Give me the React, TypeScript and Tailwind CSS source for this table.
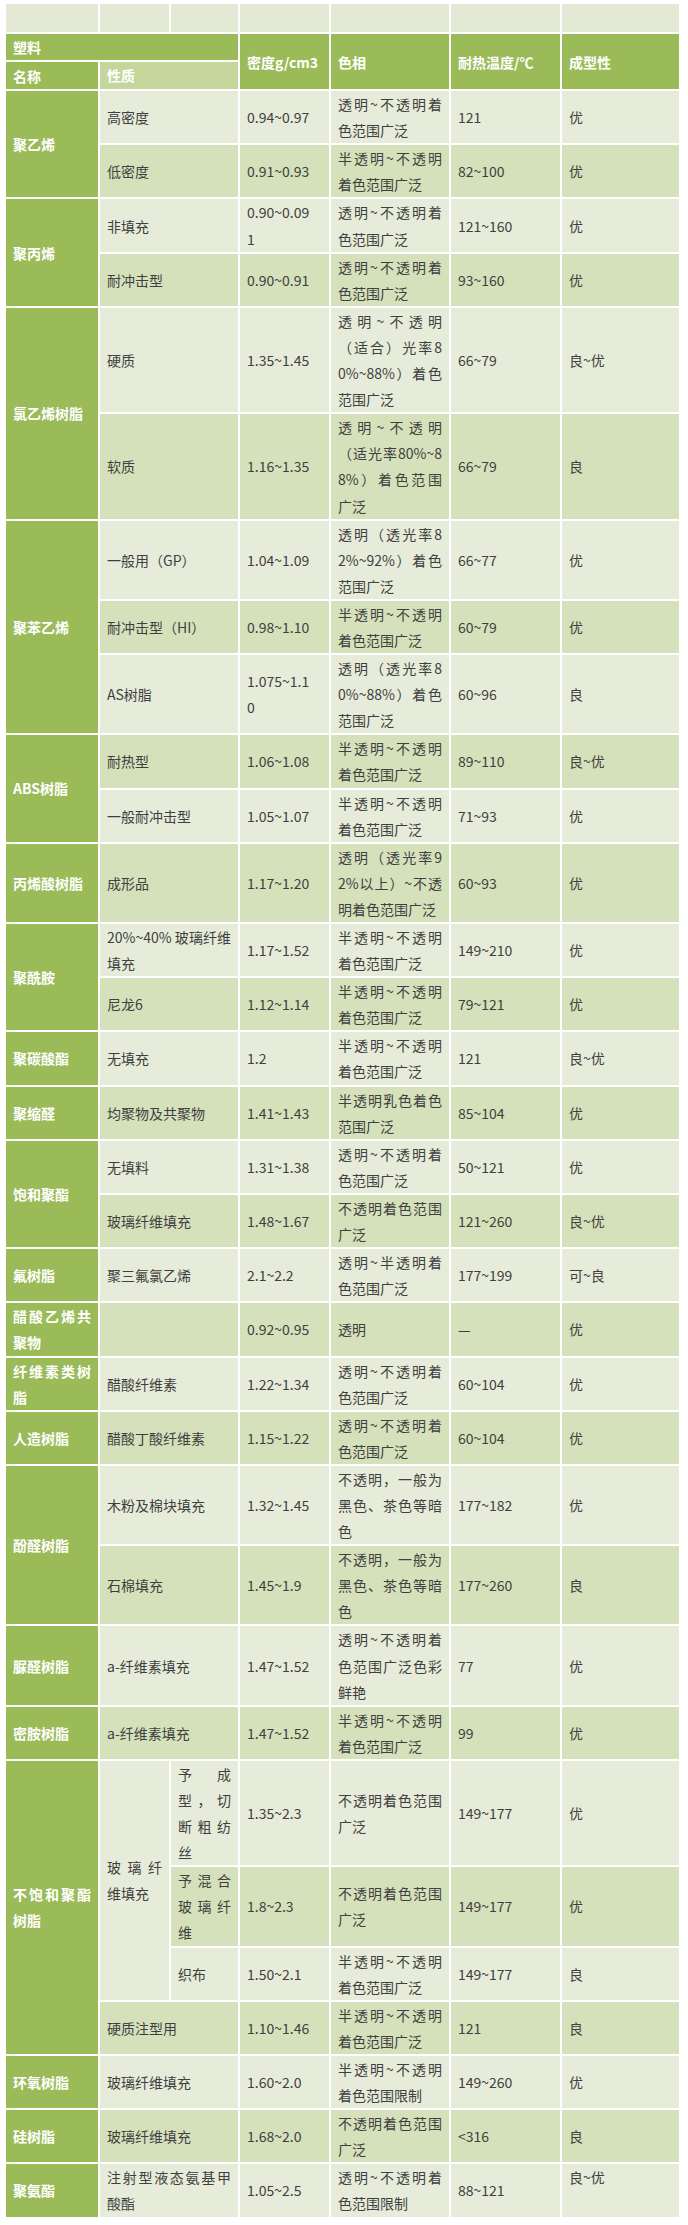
import React from 'react';

// Plastic properties table (green banded style).
type Row = {
  prop?: string[];
  density: string[];
  color: string[];
  heat: string;
  form: string;
  formTop?: boolean;
};

type Group = { name: string[]; rows: Row[] };

const SEMI = ['半透明~不透明', '着色范围广泛'];
const CLEAR = ['透明~不透明着', '色范围广泛'];
const OPAQUE = ['不透明着色范围', '广泛'];
const DARK_TONE = ['不透明，一般为', '黑色、茶色等暗', '色'];

const GROUPS_TOP: Group[] = [
  {
    name: ['聚乙烯'],
    rows: [
      { prop: ['高密度'], density: ['0.94~0.97'], color: CLEAR, heat: '121', form: '优' },
      { prop: ['低密度'], density: ['0.91~0.93'], color: SEMI, heat: '82~100', form: '优' },
    ],
  },
  {
    name: ['聚丙烯'],
    rows: [
      { prop: ['非填充'], density: ['0.90~0.09', '1'], color: CLEAR, heat: '121~160', form: '优' },
      { prop: ['耐冲击型'], density: ['0.90~0.91'], color: CLEAR, heat: '93~160', form: '优' },
    ],
  },
  {
    name: ['氯乙烯树脂'],
    rows: [
      {
        prop: ['硬质'],
        density: ['1.35~1.45'],
        color: ['透明~不透明', '（适合）光率8', '0%~88%）着色', '范围广泛'],
        heat: '66~79',
        form: '良~优',
      },
      {
        prop: ['软质'],
        density: ['1.16~1.35'],
        color: ['透明~不透明', '（适光率80%~8', '8%）着色范围', '广泛'],
        heat: '66~79',
        form: '良',
      },
    ],
  },
  {
    name: ['聚苯乙烯'],
    rows: [
      {
        prop: ['一般用（GP）'],
        density: ['1.04~1.09'],
        color: ['透明（透光率8', '2%~92%）着色', '范围广泛'],
        heat: '66~77',
        form: '优',
      },
      { prop: ['耐冲击型（HI）'], density: ['0.98~1.10'], color: SEMI, heat: '60~79', form: '优' },
      {
        prop: ['AS树脂'],
        density: ['1.075~1.1', '0'],
        color: ['透明（透光率8', '0%~88%）着色', '范围广泛'],
        heat: '60~96',
        form: '良',
      },
    ],
  },
  {
    name: ['ABS树脂'],
    rows: [
      { prop: ['耐热型'], density: ['1.06~1.08'], color: SEMI, heat: '89~110', form: '良~优' },
      { prop: ['一般耐冲击型'], density: ['1.05~1.07'], color: SEMI, heat: '71~93', form: '优' },
    ],
  },
  {
    name: ['丙烯酸树脂'],
    rows: [
      {
        prop: ['成形品'],
        density: ['1.17~1.20'],
        color: ['透明（透光率9', '2%以上）~不透', '明着色范围广泛'],
        heat: '60~93',
        form: '优',
      },
    ],
  },
  {
    name: ['聚酰胺'],
    rows: [
      { prop: ['20%~40% 玻璃纤维', '填充'], density: ['1.17~1.52'], color: SEMI, heat: '149~210', form: '优' },
      { prop: ['尼龙6'], density: ['1.12~1.14'], color: SEMI, heat: '79~121', form: '优' },
    ],
  },
  { name: ['聚碳酸酯'], rows: [{ prop: ['无填充'], density: ['1.2'], color: SEMI, heat: '121', form: '良~优' }] },
  {
    name: ['聚缩醛'],
    rows: [{ prop: ['均聚物及共聚物'], density: ['1.41~1.43'], color: ['半透明乳色着色', '范围广泛'], heat: '85~104', form: '优' }],
  },
  {
    name: ['饱和聚酯'],
    rows: [
      { prop: ['无填料'], density: ['1.31~1.38'], color: CLEAR, heat: '50~121', form: '优' },
      { prop: ['玻璃纤维填充'], density: ['1.48~1.67'], color: OPAQUE, heat: '121~260', form: '良~优' },
    ],
  },
  {
    name: ['氟树脂'],
    rows: [{ prop: ['聚三氟氯乙烯'], density: ['2.1~2.2'], color: ['透明~半透明着', '色范围广泛'], heat: '177~199', form: '可~良' }],
  },
  { name: ['醋酸乙烯共', '聚物'], rows: [{ prop: [], density: ['0.92~0.95'], color: ['透明'], heat: '—', form: '优' }] },
  { name: ['纤维素类树', '脂'], rows: [{ prop: ['醋酸纤维素'], density: ['1.22~1.34'], color: CLEAR, heat: '60~104', form: '优' }] },
  { name: ['人造树脂'], rows: [{ prop: ['醋酸丁酸纤维素'], density: ['1.15~1.22'], color: CLEAR, heat: '60~104', form: '优' }] },
  {
    name: ['酚醛树脂'],
    rows: [
      { prop: ['木粉及棉块填充'], density: ['1.32~1.45'], color: DARK_TONE, heat: '177~182', form: '优' },
      { prop: ['石棉填充'], density: ['1.45~1.9'], color: DARK_TONE, heat: '177~260', form: '良' },
    ],
  },
  {
    name: ['脲醛树脂'],
    rows: [
      { prop: ['a-纤维素填充'], density: ['1.47~1.52'], color: ['透明~不透明着', '色范围广泛色彩', '鲜艳'], heat: '77', form: '优' },
    ],
  },
  { name: ['密胺树脂'], rows: [{ prop: ['a-纤维素填充'], density: ['1.47~1.52'], color: SEMI, heat: '99', form: '优' }] },
];

const GROUPS_BOTTOM: Group[] = [
  {
    name: ['环氧树脂'],
    rows: [{ prop: ['玻璃纤维填充'], density: ['1.60~2.0'], color: ['半透明~不透明', '着色范围限制'], heat: '149~260', form: '优' }],
  },
  { name: ['硅树脂'], rows: [{ prop: ['玻璃纤维填充'], density: ['1.68~2.0'], color: OPAQUE, heat: '<316', form: '良' }] },
  {
    name: ['聚氨酯'],
    rows: [
      {
        prop: ['注射型液态氨基甲', '酸酯'],
        density: ['1.05~2.5'],
        color: ['透明~不透明着', '色范围限制'],
        heat: '88~121',
        form: '良~优',
        formTop: true,
      },
    ],
  },
];

const GREEN = 'bg-[#9bbb59]';
const LIGHT = 'bg-[#e6ecd9]';
const SHADE = 'bg-[#d5e1bb]';
const CELL = 'px-[7px] py-0 leading-[26.1px] text-[14px] text-[#3f3f3f]';
const HEAD = `${GREEN} px-[7px] py-0 leading-[26.1px] text-[14px] font-bold text-white`;
const NAME = `${GREEN} px-[7px] py-0 leading-[26.1px] text-[14px] font-bold text-white`;

function Lines({ lines }: { lines: string[] }) {
  return (
    <>
      {lines.map((l, i) => (
        <span key={i} className={i < lines.length - 1 ? 'block text-justify [text-align-last:justify]' : 'block'}>
          {l}
        </span>
      ))}
    </>
  );
}

function DataCells({ row, bg }: { row: Row; bg: string }) {
  return (
    <>
      <td className={`${bg} ${CELL}`}>
        <Lines lines={row.density} />
      </td>
      <td className={`${bg} ${CELL}`}>
        <Lines lines={row.color} />
      </td>
      <td className={`${bg} ${CELL}`}>{row.heat}</td>
      <td className={`${bg} ${CELL} ${row.formTop ? 'align-top' : ''}`}>{row.form}</td>
    </>
  );
}

function GroupRows({ group, start }: { group: Group; start: number }) {
  return (
    <>
      {group.rows.map((row, i) => {
        const bg = (start + i) % 2 === 0 ? LIGHT : SHADE;
        return (
          <tr key={i}>
            {i === 0 && (
              <td rowSpan={group.rows.length} className={NAME}>
                <Lines lines={group.name} />
              </td>
            )}
            <td colSpan={2} className={`${bg} ${CELL}`}>
              <Lines lines={row.prop ?? []} />
            </td>
            <DataCells row={row} bg={bg} />
          </tr>
        );
      })}
    </>
  );
}

function renderGroups(groups: Group[], offset: number) {
  let idx = offset;
  return groups.map((g) => {
    const start = idx;
    idx += g.rows.length;
    return <GroupRows key={g.name.join('')} group={g} start={start} />;
  });
}

export default function App() {
  const topCount = GROUPS_TOP.reduce((n, g) => n + g.rows.length, 0);
  const polyStart = topCount; // 26 -> light
  const bg = (n: number) => ((polyStart + n) % 2 === 0 ? LIGHT : SHADE);

  return (
    <div className="min-h-[2225px] bg-white pl-[4px] pt-[2px] [font-family:'Noto_Sans_CJK_SC','Noto_Sans',sans-serif]">
      <table className="w-[677px] table-fixed border-separate border-spacing-[2px]">
        <colgroup>
          <col className="w-[92px]" />
          <col className="w-[69px]" />
          <col className="w-[67px]" />
          <col className="w-[89px]" />
          <col className="w-[118px]" />
          <col className="w-[109px]" />
          <col className="w-[117px]" />
        </colgroup>
        <tbody>
          <tr className="h-[28px]">
            {Array.from({ length: 7 }).map((_, i) => (
              <td key={i} className="bg-[#e4e9d6]" />
            ))}
          </tr>
          <tr>
            <td colSpan={3} className={HEAD}>
              塑料
            </td>
            <td rowSpan={2} className={HEAD}>
              密度g/cm3
            </td>
            <td rowSpan={2} className={HEAD}>
              色相
            </td>
            <td rowSpan={2} className={HEAD}>
              耐热温度/℃
            </td>
            <td rowSpan={2} className={HEAD}>
              成型性
            </td>
          </tr>
          <tr>
            <td className={HEAD}>名称</td>
            <td colSpan={2} className="bg-[#c4d69c] px-[7px] py-0 text-[14px] font-bold leading-[27px] text-white">
              性质
            </td>
          </tr>

          {renderGroups(GROUPS_TOP, 0)}

          {/* 不饱和聚酯树脂: nested glass-fibre rows */}
          <tr>
            <td rowSpan={4} className={NAME}>
              <Lines lines={['不饱和聚酯', '树脂']} />
            </td>
            <td rowSpan={3} className={`${bg(0)} ${CELL}`}>
              <Lines lines={['玻璃纤', '维填充']} />
            </td>
            <td className={`${bg(0)} ${CELL}`}>
              <Lines lines={['予成', '型，切', '断粗纺', '丝']} />
            </td>
            <DataCells row={{ density: ['1.35~2.3'], color: OPAQUE, heat: '149~177', form: '优' }} bg={bg(0)} />
          </tr>
          <tr>
            <td className={`${bg(1)} ${CELL}`}>
              <Lines lines={['予混合', '玻璃纤', '维']} />
            </td>
            <DataCells row={{ density: ['1.8~2.3'], color: OPAQUE, heat: '149~177', form: '优' }} bg={bg(1)} />
          </tr>
          <tr>
            <td className={`${bg(2)} ${CELL}`}>织布</td>
            <DataCells row={{ density: ['1.50~2.1'], color: SEMI, heat: '149~177', form: '良' }} bg={bg(2)} />
          </tr>
          <tr>
            <td colSpan={2} className={`${bg(3)} ${CELL}`}>
              硬质注型用
            </td>
            <DataCells row={{ density: ['1.10~1.46'], color: SEMI, heat: '121', form: '良' }} bg={bg(3)} />
          </tr>

          {renderGroups(GROUPS_BOTTOM, polyStart + 4)}
        </tbody>
      </table>
    </div>
  );
}
